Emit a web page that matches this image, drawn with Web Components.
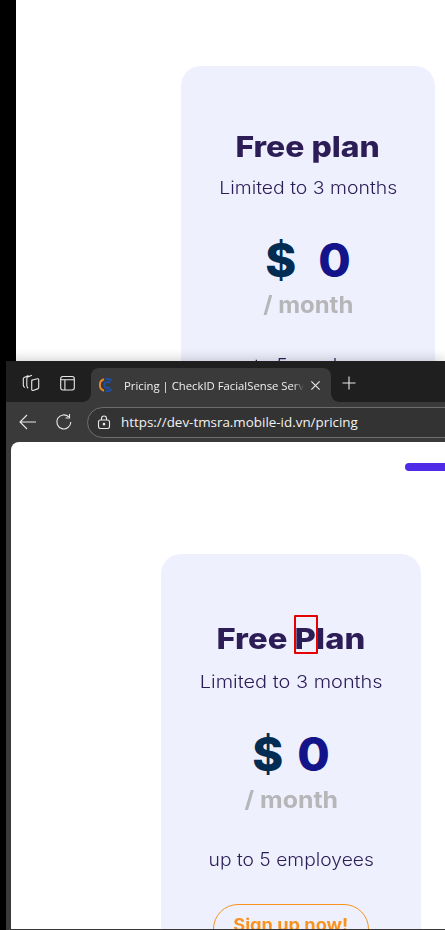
<!DOCTYPE html>
<html lang="en">
<head>
<meta charset="utf-8">
<title>Pricing</title>
<style>
  html, body { margin: 0; padding: 0; background: #000; }
  body { width: 445px; height: 930px; overflow: hidden; font-family: Inter, "Liberation Sans", sans-serif; }
</style>
</head>
<body>
<page-shot>
  <plan-card slot="behind" nobutton style="--w:254px;--ml:165px;--mt:66px;--title-top:63px;--sub-top:12px;--price-top:34px;--month-top:3px;--users-top:34px;--gap:22px;--tx:1.1;--sx:1.11;--mx:1.04;--ux:1.07">
    <span slot="title">Free plan</span>
    <span slot="sub">Limited to 3 months</span>
    <span slot="cur">$</span>
    <span slot="amount">0</span>
    <span slot="users">up to 5 employees</span>
  </plan-card>
  <browser-window slot="front">
    <plan-card marked style="--w:260px;--ml:150px;--mt:112px;--title-top:67px;--sub-top:14px;--price-top:34px;--month-top:4px;--users-top:33px;--gap:14px;--tx:1.13;--sx:1.14;--mx:1.08;--ux:1.07">
      <span slot="title">Free Plan</span>
      <span slot="sub">Limited to 3 months</span>
      <span slot="cur">$</span>
      <span slot="amount">0</span>
      <span slot="users">up to 5 employees</span>
    </plan-card>
  </browser-window>
</page-shot>

<script>
class PageShot extends HTMLElement {
  constructor() {
    super();
    this.attachShadow({ mode: 'open' }).innerHTML = `
      <style>
        :host { display: flex; flex-direction: column; width: 445px; height: 930px; background: #000; overflow: hidden; }
        #behind { height: 361px; margin-left: 16px; background: #fff; overflow: hidden; flex: none; }
        #front { margin-left: 6px; flex: none; height: 568px; position: relative; box-shadow: 0 -3px 10px rgba(0,0,0,.16); }
        #edge { height: 1px; background: #3a3a3a; flex: none; margin-left: 6px; }
      </style>
      <div id="behind"><slot name="behind"></slot></div>
      <div id="front"><slot name="front"></slot></div>
      <div id="edge"></div>`;
  }
}

class PlanCard extends HTMLElement {
  constructor() {
    super();
    this.attachShadow({ mode: 'open' }).innerHTML = `
      <style>
        :host {
          display: block; box-sizing: border-box; position: relative;
          width: var(--w); margin: var(--mt) 0 0 var(--ml); height: 520px;
          background: #eef0fe; border-radius: 20px; text-align: center;
          font-family: Inter, "Liberation Sans", sans-serif; color: #2c1d56;
        }
        .w { display: inline-block; white-space: nowrap; }
        .title { padding-top: var(--title-top); font-size: 29px; line-height: 36px; font-weight: 800; }
        .title .w { transform: scaleX(var(--tx)); }
        .sub { margin-top: var(--sub-top); font-size: 17.5px; line-height: 22px; font-weight: 300; }
        .sub .w { transform: scaleX(var(--sx)); }
        .price { margin-top: var(--price-top); display: flex; justify-content: center; gap: var(--gap); font-size: 47px; line-height: 54px; font-weight: 800; }
        .cur { color: #022c52; }
        .amount { color: #14148a; }
        .month { margin-top: var(--month-top); font-size: 23px; line-height: 30px; font-weight: 700; color: #b6b6b8; }
        .month .w { transform: scaleX(var(--mx)); }
        .users { margin-top: var(--users-top); font-size: 18px; line-height: 24px; font-weight: 300; }
        .users .w { transform: scaleX(var(--ux)); }
        .btn {
          display: block; box-sizing: border-box; width: 156px; height: 50px; margin: 32px auto 0;
          border: 1px solid #f7931e; border-radius: 25px; color: #f7931e; font-size: 17px; line-height: 40px; font-weight: 700;
        }
        .btn .w { transform: scaleX(1.07); }
        :host([nobutton]) .btn { display: none; }
        .mark { display: none; position: absolute; left: 133px; top: 61px; width: 24px; height: 39px; box-sizing: border-box; border: 2px solid #e60000; border-radius: 1px; }
        :host([marked]) .mark { display: block; }
      </style>
      <div class="title"><span class="w"><slot name="title"></slot></span></div>
      <div class="sub"><span class="w"><slot name="sub"></slot></span></div>
      <div class="price"><span class="cur"><slot name="cur"></slot></span><span class="amount"><slot name="amount"></slot></span></div>
      <div class="month"><span class="w">/ month</span></div>
      <div class="users"><span class="w"><slot name="users"></slot></span></div>
      <div class="btn"><span class="w">Sign up now!</span></div>
      <div class="mark"></div>`;
  }
}

class BrowserWindow extends HTMLElement {
  constructor() {
    super();
    this.attachShadow({ mode: 'open' }).innerHTML = `
      <style>
        :host { display: flex; flex-direction: column; height: 100%; background: #3a3a3a; overflow: hidden; font-family: "Open Sans", "Noto Sans", sans-serif; color: #fff; }
        svg { display: block; flex: none; fill: none; stroke: #e8e8e8; stroke-width: 1.1; }
        .tabs { display: flex; align-items: flex-end; height: 41px; flex: none; background: #1f1f1f; }
        .tools { display: flex; align-items: center; height: 40px; flex: none; background: #3a3a3a; }
        .tab-ic { align-self: center; margin-bottom: -3px; }
        .tab {
          display: flex; align-items: center; box-sizing: border-box; width: 240px; height: 34px; margin-left: 16px; position: relative;
          background: #3a3a3a; border-radius: 8px 8px 0 0; padding-left: 8px;
        }
        .tab::before, .tab::after { content: ""; position: absolute; bottom: 0; width: 8px; height: 8px; }
        .tab::before { left: -8px; background: radial-gradient(circle at 0 0, #1f1f1f 7.5px, #3a3a3a 8px); }
        .tab::after { right: -8px; background: radial-gradient(circle at 100% 0, #1f1f1f 7.5px, #3a3a3a 8px); }
        .tab-title { width: 180px; margin-left: 11px; font-size: 11.3px; white-space: nowrap; overflow: hidden; color: #f0f0f0;
          -webkit-mask-image: linear-gradient(90deg, #000 94%, transparent); }
        .url {
          display: flex; align-items: center; margin-left: 14px; flex: none; width: 400px; height: 31px; box-sizing: border-box;
          border: 1px solid #6e6e6e; border-radius: 16px; background: #333; padding-left: 9px;
          font-size: 13.4px; color: #f2f2f2; white-space: nowrap;
        }
        .view { flex: 1; margin-left: 5px; background: #fff; border-radius: 8px 0 0 0; overflow: hidden; position: relative; }
        .bar { position: absolute; right: 0; top: 21px; width: 40px; height: 8px; border-radius: 4px 0 0 4px; background: #4f2be8; }
      </style>
      <div class="tabs">
        <svg class="tab-ic" style="margin-left:16px" width="18" height="18" viewBox="0 0 18 18"><path d="M6.500 1.500 2.200 3.400A1.500 1.500 0 0 0 1.300 4.800v6.200c0 1 .6 2 1.500 2.600M10 1.200 5.700 3.100a1.500 1.500 0 0 0-.9 1.400v7c0 1.100.5 2.100 1.400 2.700"/><path d="M9.300 6.300l6.200-1.600a1 1 0 0 1 1.200 1v7.800a1.500 1.500 0 0 1-1.100 1.400l-4.600 1.500a1 1 0 0 1-1.300-1V7.700a1.500 1.500 0 0 1 .6-1.400z"/></svg>
        <svg class="tab-ic" style="margin-left:20px" width="15" height="16" viewBox="0 0 15 16"><rect x=".7" y="1.500" width="13.600" height="13.500" rx="2.200"/><path d="M.7 4.700h13.600M4.900 4.700v10.300"/></svg>
        <div class="tab">
          <svg width="14" height="14" viewBox="0 0 14 14" style="stroke-width:2"><path d="M5 1.300a6 6 0 0 0 0 11.400" stroke="#e8862a"/><path d="M12.500 3a6 6 0 0 0-6-2M6.500 13a6 6 0 0 0 6-2" stroke="#1d4fa8"/><path d="M10.800 5.300a3 3 0 1 0 0 3.400" stroke="#1d4fa8"/></svg>
          <div class="tab-title">Pricing | CheckID FacialSense Serv</div>
          <svg width="11" height="11" viewBox="0 0 12 12" style="margin-left:6px;stroke-width:1.300"><path d="M1.500 1.500l9 9M10.500 1.500l-9 9"/></svg>
        </div>
        <svg class="tab-ic" style="margin-left:11px" width="14" height="14" viewBox="0 0 14 14"><path d="M7 .5v13M.5 7h13"/></svg>
      </div>
      <div class="tools">
        <svg style="margin-left:13px" width="18" height="16" viewBox="0 0 18 16"><path d="M17 8H1M8 1 1 8l7 7"/></svg>
        <svg style="margin-left:18px" width="18" height="18" viewBox="0 0 18 18"><path d="M15.800 9a7 7 0 1 1-2-5"/><path d="M14.500 1v4h-4" /></svg>
        <div class="url">
          <svg width="14" height="14" viewBox="0 0 14 14" style="margin-right:10px"><rect x="1.500" y="5" width="11" height="8.500" rx="2"/><path d="M4.500 5V3.500a2.500 2.500 0 0 1 5 0V5"/><circle cx="7" cy="9.200" r=".8" fill="#e8e8e8"/></svg>
          <span>https://dev-tmsra.mobile-id.vn/pricing</span>
        </div>
      </div>
      <div class="view"><div class="bar"></div><slot></slot></div>`;
  }
}

customElements.define('page-shot', PageShot);
customElements.define('plan-card', PlanCard);
customElements.define('browser-window', BrowserWindow);
</script>
</body>
</html>
